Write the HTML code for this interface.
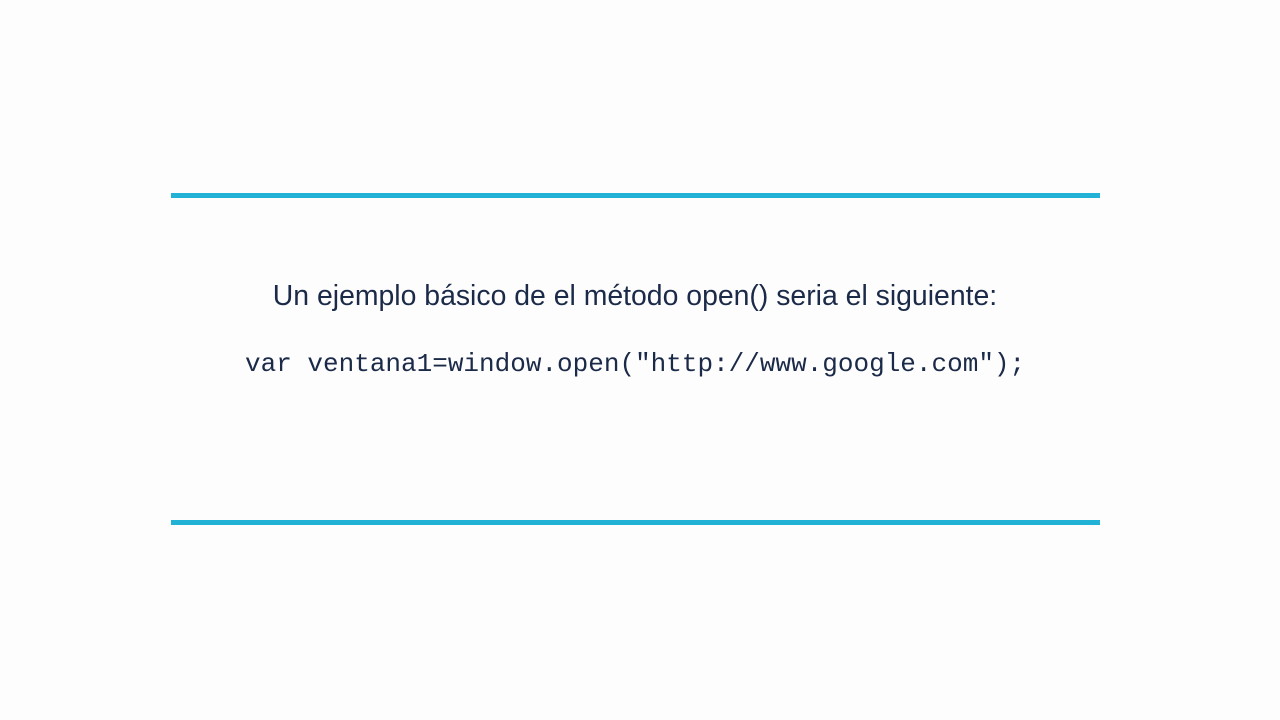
<!DOCTYPE html>
<html><head><meta charset="utf-8"><style>
html,body{margin:0;padding:0;background:#fdfdfd;width:1280px;height:720px;overflow:hidden;position:relative}
.line{position:absolute;left:171px;width:929px;height:5px;background:#22b2d6}
.t{position:absolute;left:0;width:1270px;text-align:center;color:#1b2a48;white-space:nowrap}
</style></head><body>
<div class="line" style="top:193px"></div>
<div class="line" style="top:520px"></div>
<div class="t" style="top:280px;font:28.4px 'Liberation Sans',sans-serif;">Un ejemplo básico de el método open() seria el siguiente:</div>
<div class="t" style="top:349px;left:245px;width:auto;text-align:left;font:26px 'Liberation Mono',monospace;">var ventana1=window.open("http://www.google.com");</div>
</body></html>
